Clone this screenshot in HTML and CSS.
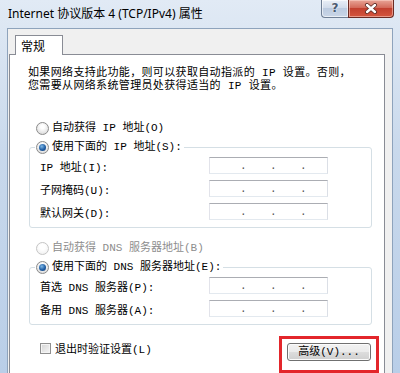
FILE: index.html
```html
<!DOCTYPE html>
<html lang="zh">
<head>
<meta charset="utf-8">
<link rel="stylesheet" href="styles.css">
</head>
<body>
<div class="window">
  <div class="titlebar">
    <div class="title">Internet 协议版本 4 (TCP/IPv4) 属性</div>
    <div class="caption-btns">
      <div class="btn-help">?</div>
      <div class="btn-close">
        <svg width="14" height="11" viewBox="0 0 14 11">
          <path d="M3 2 L11 9 M11 2 L3 9" stroke="#5a2a24" stroke-width="4" stroke-linecap="round"/>
          <path d="M3 2 L11 9 M11 2 L3 9" stroke="#ffffff" stroke-width="2.4" stroke-linecap="round"/>
        </svg>
      </div>
    </div>
  </div>
  <div class="client">
    <div class="tabs"><div class="tab">常规</div></div>
    <div class="panel">
      <p class="intro">如果网络支持此功能，则可以获取自动指派的 IP 设置。否则，<br>您需要从网络系统管理员处获得适当的 IP 设置。</p>
      <div class="opt standalone"><span class="radio"></span><span>自动获得 IP 地址(O)</span></div>
      <fieldset class="group">
        <legend><span class="opt"><span class="radio checked"></span><span>使用下面的 IP 地址(S):</span></span></legend>
        <div class="rows">
          <div class="row"><span class="label">IP 地址(I):</span><span class="ip"><span class="dot">.</span><span class="dot">.</span><span class="dot">.</span></span></div>
          <div class="row"><span class="label">子网掩码(U):</span><span class="ip"><span class="dot">.</span><span class="dot">.</span><span class="dot">.</span></span></div>
          <div class="row"><span class="label">默认网关(D):</span><span class="ip"><span class="dot">.</span><span class="dot">.</span><span class="dot">.</span></span></div>
        </div>
      </fieldset>
      <div class="opt standalone disabled gap"><span class="radio"></span><span>自动获得 DNS 服务器地址(B)</span></div>
      <fieldset class="group">
        <legend><span class="opt"><span class="radio checked"></span><span>使用下面的 DNS 服务器地址(E):</span></span></legend>
        <div class="rows">
          <div class="row"><span class="label">首选 DNS 服务器(P):</span><span class="ip"><span class="dot">.</span><span class="dot">.</span><span class="dot">.</span></span></div>
          <div class="row"><span class="label">备用 DNS 服务器(A):</span><span class="ip"><span class="dot">.</span><span class="dot">.</span><span class="dot">.</span></span></div>
        </div>
      </fieldset>
      <div class="bottom">
        <div class="check"><span class="checkbox"></span><span>退出时验证设置(L)</span></div>
        <div class="highlight"><div class="button">高级(V)...</div></div>
      </div>
    </div>
  </div>
</div>
</body>
</html>
```

FILE: styles.css
```css
* { box-sizing: border-box; }
body {
  margin: 0;
  width: 400px;
  height: 373px;
  overflow: hidden;
  background: #c9d8ea;
}
.window {
  height: 373px;
  display: flex;
  flex-direction: column;
  padding: 0 7px;
  background: linear-gradient(#e1eaf5, #c9d9ec 40%, #b9cee8);
}
.titlebar {
  height: 28px;
  flex: none;
  display: flex;
  justify-content: space-between;
  align-items: flex-start;
  margin-right: -1px;
}
.title {
  padding-left: 1px;
  line-height: 28px;
  font-family: "Noto Sans", "Noto Sans CJK SC", sans-serif;
  font-size: 12px;
  color: #000;
}
.caption-btns { display: flex; }
.btn-help {
  width: 27px;
  height: 18px;
  border: 1px solid #6f7f95;
  border-top: none;
  border-right: none;
  border-radius: 0 0 0 4px;
  background: linear-gradient(#e9eff7, #d2dceb 45%, #bccbe0 50%, #c9d6e7);
  box-shadow: inset 0 0 0 1px rgba(255,255,255,0.6);
  text-align: center;
  font-family: "DejaVu Sans", sans-serif;
  font-weight: bold;
  font-size: 12px;
  line-height: 17px;
  color: #4a5a70;
  text-shadow: 0 0 2px #fff;
}
.btn-close {
  width: 46px;
  height: 18px;
  border: 1px solid #6b2b24;
  border-top: none;
  border-radius: 0 0 4px 0;
  background: linear-gradient(#e8a597, #d36a5a 45%, #c2402f 50%, #d4563f);
  box-shadow: inset 0 0 0 1px rgba(255,220,210,0.5);
  display: flex;
  align-items: center;
  justify-content: center;
}
.client {
  flex: 1;
  min-height: 0;
  display: flex;
  flex-direction: column;
  background: #f0f0f0;
  border: 1px solid #8ea3bc;
  border-bottom: none;
  padding: 6px 7px 0 1px;
  font-family: "Liberation Mono", "Noto Sans CJK SC", monospace;
  font-size: 11px;
  color: #000;
}
.tabs {
  display: flex;
  padding-left: 6px;
  flex: none;
}
.tab {
  width: 48px;
  height: 20px;
  margin-bottom: -1px;
  border: 1px solid #898c95;
  border-bottom: none;
  background: #fff;
  position: relative;
  z-index: 1;
  padding-left: 5px;
  font-family: "Noto Sans CJK SC", sans-serif;
  font-size: 12px;
  line-height: 19px;
}
.panel {
  flex: 1;
  min-height: 0;
  background: #fff;
  border: 1px solid #898c95;
  border-bottom: none;
  padding: 0 12px 0 18px;
}
.intro {
  margin: 12px 0 0;
  line-height: 13px;
  letter-spacing: 0.35px;
  white-space: nowrap;
}
.opt {
  display: flex;
  align-items: center;
  gap: 3px;
  height: 16px;
  line-height: 16px;
  white-space: nowrap;
}
.opt.standalone { margin: 27px 0 0 8px; }
.opt.standalone.gap { margin-top: 12px; }
.opt.disabled { color: #8d8d8d; }
.radio {
  flex: none;
  width: 13px;
  height: 13px;
  border-radius: 50%;
  border: 1px solid #8b8b8b;
  background: radial-gradient(circle at 50% 35%, #ffffff 20%, #e2e2e2 70%, #cfcfcf);
  display: flex;
  align-items: center;
  justify-content: center;
}
.opt.disabled .radio {
  border-color: #c5c5c5;
  background: radial-gradient(circle at 50% 35%, #ffffff 30%, #ececec);
}
.radio.checked::after {
  content: "";
  width: 7px;
  height: 7px;
  border-radius: 50%;
  background: radial-gradient(circle at 40% 35%, #7fb8e6, #1f5da3 55%, #143a70);
}
.group {
  margin: 3px 0 0 1px;
  padding: 0;
  border: 1px solid #d5dfe5;
  border-radius: 3px;
  min-width: 0;
}
.group legend {
  margin-left: 5px;
  padding: 0 2px 0 1px;
}
.rows {
  display: flex;
  flex-direction: column;
  gap: 6px;
  padding: 2px 0 7px 10px;
}
.row {
  display: flex;
  align-items: center;
  height: 17px;
}
.label {
  width: 169px;
  white-space: nowrap;
}
.ip {
  width: 119px;
  height: 17px;
  border: 1px solid;
  border-color: #abadb3 #dbdfe6 #e3e9ef #e2e3ea;
  background: #fff;
  display: flex;
  align-items: flex-end;
  gap: 26px;
  padding-left: 30px;
}
.dot {
  width: 4px;
  text-align: center;
  line-height: 13px;
  color: #555;
}
.bottom {
  display: flex;
  justify-content: space-between;
  align-items: flex-start;
  margin: 11px -7px 0 0;
}
.check {
  display: flex;
  align-items: center;
  gap: 4px;
  height: 16px;
  margin: 4px 0 0 12px;
  white-space: nowrap;
}
.checkbox {
  width: 11px;
  height: 11px;
  border: 1px solid #8f8f8f;
  background: linear-gradient(135deg, #d4d4d4, #f6f6f6);
  box-shadow: inset 0 0 0 1px #f4f4f4;
}
.highlight {
  border: 3px solid #e3262b;
  padding: 4px 5px 9px;
}
.button {
  width: 84px;
  height: 18px;
  border: 1px solid #707070;
  border-radius: 3px;
  background: linear-gradient(#f2f2f2, #ebebeb 50%, #dddddd 50%, #cfcfcf);
  box-shadow: inset 0 0 0 1px #fbfbfb;
  text-align: center;
  line-height: 16px;
  white-space: nowrap;
}
```
